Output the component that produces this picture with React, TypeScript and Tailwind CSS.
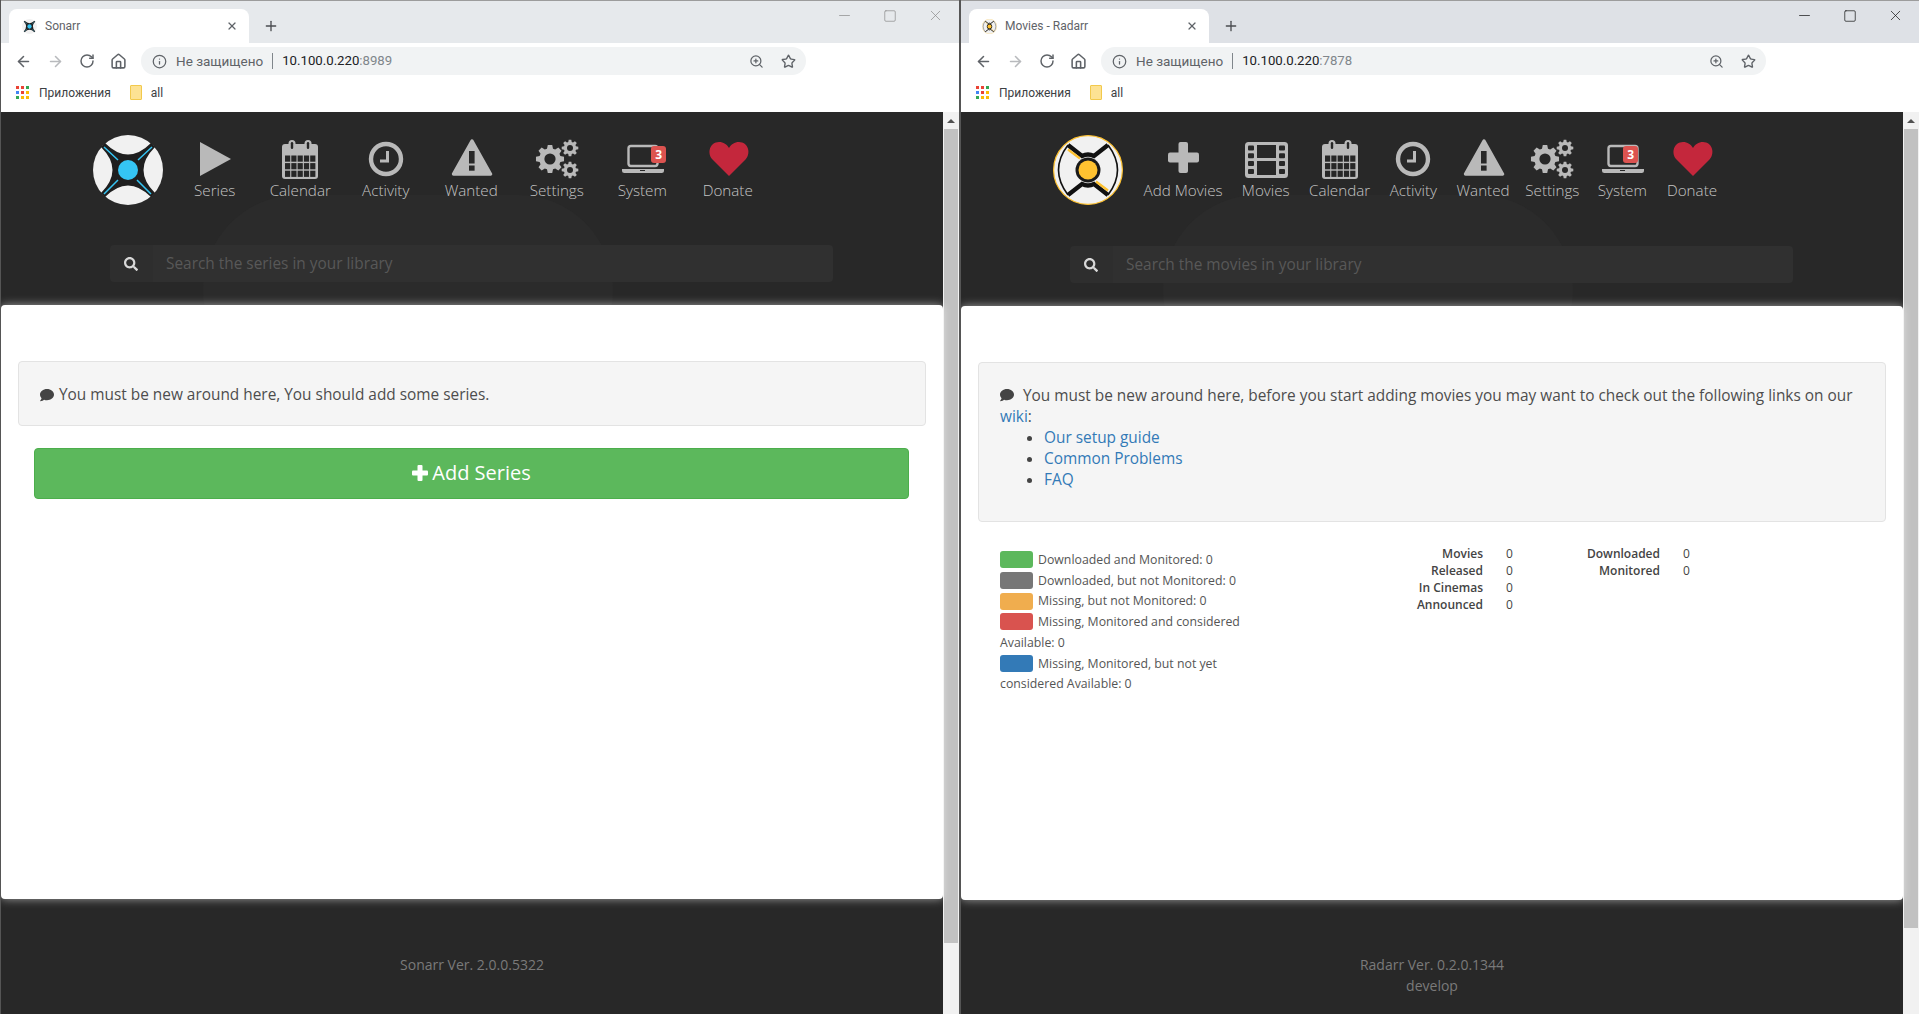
import React from 'react';
import { ArrowLeft, ArrowRight, RotateCw, Home, Info, ZoomIn, Star, X, Plus, Minus, Square } from 'lucide-react';
import { FaComment, FaSearch } from 'react-icons/fa';

const G = '#b9b9b9';
const D = '#272727';

function gearPath(cx: number, cy: number, ro: number, ri: number, teeth: number) {
  let d = '';
  const step = (Math.PI * 2) / teeth;
  for (let i = 0; i < teeth; i++) {
    const a = i * step;
    const pts: [number, number][] = [
      [ri, a - step * 0.36],
      [ro, a - step * 0.2],
      [ro, a + step * 0.2],
      [ri, a + step * 0.36],
    ];
    pts.forEach(([r, t], j) => {
      const x = cx + r * Math.cos(t);
      const y = cy + r * Math.sin(t);
      d += `${i === 0 && j === 0 ? 'M' : 'L'}${x.toFixed(2)} ${y.toFixed(2)}`;
    });
  }
  return d + 'Z';
}

function Ic({ children }: { children: React.ReactNode }) {
  return (
    <svg viewBox="0 0 48 40" className="w-[48px] h-[40px]">
      {children}
    </svg>
  );
}

const PlayIcon = () => (
  <Ic>
    <path d="M9 3 L40 20 L9 37 Z" fill={G} />
  </Ic>
);

const CalendarIcon = () => {
  const cells: React.ReactNode[] = [];
  for (let r = 0; r < 3; r++)
    for (let c = 0; c < 5; c++)
      cells.push(<rect key={`${r}${c}`} x={9 + c * 6.3} y={16.5 + r * 7.6} width="5.2" height="6.2" fill={D} />);
  return (
    <Ic>
      <rect x="6" y="5" width="36" height="35" rx="3" fill={G} />
      {cells}
      <rect x="12.5" y="1" width="7" height="11" rx="3.5" fill={G} />
      <rect x="28.5" y="1" width="7" height="11" rx="3.5" fill={G} />
      <rect x="14.8" y="3" width="2.4" height="7" rx="1.2" fill={D} />
      <rect x="30.8" y="3" width="2.4" height="7" rx="1.2" fill={D} />
    </Ic>
  );
};

const ClockIcon = () => (
  <Ic>
    <circle cx="24" cy="20" r="15" fill="none" stroke={G} strokeWidth="4.4" />
    <path d="M25.5 12 V22 H18" fill="none" stroke={G} strokeWidth="3" />
  </Ic>
);

const WarnIcon = () => (
  <Ic>
    <path d="M25 2 L43.5 35 H6.5 Z" fill={G} stroke={G} strokeWidth="3.4" strokeLinejoin="round" />
    <rect x="22" y="12" width="5.6" height="12.5" fill={D} />
    <rect x="22" y="26.5" width="5.6" height="5.2" fill={D} />
  </Ic>
);

const GearIcon = () => (
  <Ic>
    <path d={gearPath(17, 20, 14.2, 10.8, 8)} fill={G} />
    <circle cx="17" cy="20" r="5.6" fill={D} />
    <path d={gearPath(37, 9, 8.4, 6.2, 8)} fill={G} />
    <circle cx="37" cy="9" r="3" fill={D} />
    <path d={gearPath(37, 31, 8.4, 6.2, 8)} fill={G} />
    <circle cx="37" cy="31" r="3" fill={D} />
  </Ic>
);

const LaptopIcon = () => (
  <Ic>
    <rect x="10.5" y="7" width="29" height="20" rx="2.5" fill="none" stroke={G} strokeWidth="2.4" />
    <path d="M4 30 H46 V31.5 Q46 34 43.5 34 H6.5 Q4 34 4 31.5 Z" fill={G} />
    <rect x="22" y="31" width="5" height="1" fill={D} />
  </Ic>
);

const HeartIcon = () => (
  <Ic>
    <path
      d="M25 37 L8.5 20.5 C2.5 14 6 3 15 3 C19.5 3 23 5.5 25 9 C27 5.5 30.5 3 35 3 C44 3 47.5 14 41.5 20.5 Z"
      fill="#c4273c"
    />
  </Ic>
);

const PlusIcon = () => (
  <Ic>
    <rect x="19.5" y="3" width="9.5" height="31" rx="2" fill={G} />
    <rect x="9" y="13.5" width="31" height="10" rx="2" fill={G} />
  </Ic>
);

const FilmIcon = () => {
  const holes: React.ReactNode[] = [];
  for (let i = 0; i < 4; i++) {
    holes.push(<rect key={`l${i}`} x="6" y={6.5 + i * 7.8} width="6" height="5" rx="1" fill={D} />);
    holes.push(<rect key={`r${i}`} x="37" y={6.5 + i * 7.8} width="6" height="5" rx="1" fill={D} />);
  }
  return (
    <Ic>
      <rect x="3" y="3" width="43" height="36" rx="3.5" fill={G} />
      {holes}
      <rect x="15" y="6" width="19" height="13" fill={D} />
      <rect x="15" y="22" width="19" height="14" fill={D} />
    </Ic>
  );
};

function SonarrLogo({ className }: { className: string }) {
  return (
    <svg viewBox="0 0 70 70" className={className}>
      <circle cx="35" cy="35" r="35" fill="#f1f1f1" />
      <path d="M8 12 L12 8 Q35 31 58 8 L62 12 Q39 35 62 58 L58 62 Q35 39 12 62 L8 58 Q31 35 8 12 Z" fill="#1f1f1f" />
      <path d="M59 12 L45 25 M58 59 L44 45 M11 59 L25 45 M11 12 L25 25" stroke="#35c5f4" strokeWidth="1.5" />
      <circle cx="35" cy="35" r="10" fill="#35c5f4" />
    </svg>
  );
}

function RadarrLogo({ className }: { className: string }) {
  return (
    <svg viewBox="0 0 70 70" className={className}>
      <circle cx="35" cy="35" r="34.4" fill="#f1f1f1" stroke="#ffc230" strokeWidth="1.2" />
      <path d="M15 10 Q-4 35 15 60 M55 10 Q74 35 55 60" fill="none" stroke="#111" strokeWidth="1.6" />
      <path d="M15 10 L29 21 Q35 18 41 21 L55 10 M15 60 L29 49 Q35 52 41 49 L55 60" fill="none" stroke="#111" strokeWidth="4.4" />
      <circle cx="35" cy="35" r="12.5" fill="#1a1a1a" />
      <circle cx="35" cy="35" r="9.5" fill="#ffc230" />
      <path d="M15 14.5 L27 23.5 M43 46.5 L55 55.5" stroke="#ffc230" strokeWidth="2.2" />
    </svg>
  );
}

function AppsGrid() {
  const colors = ['#ea4335', '#ea4335', '#34a853', '#4285f4', '#ea4335', '#fbbc05', '#34a853', '#fbbc05', '#fbbc05'];
  return (
    <span className="grid grid-cols-3 gap-[2px] w-[13px]">
      {colors.map((c, i) => (
        <span key={i} className="w-[3px] h-[3px]" style={{ backgroundColor: c }} />
      ))}
    </span>
  );
}

function Chrome({
  title,
  favicon,
  port,
  stripClass,
  ctrlClass,
}: {
  title: string;
  favicon: React.ReactNode;
  port: string;
  stripClass: string;
  ctrlClass: string;
}) {
  return (
    <div className="font-['Roboto',sans-serif] bg-white">
      <div className={`h-[43px] border-t border-[#9c9c9c] pt-[8px] pl-[8px] flex items-start ${stripClass}`}>
        <div className="w-[240px] h-[34px] bg-white rounded-t-[8px] flex items-center pl-[13px] pr-[11px]">
          {favicon}
          <span className="ml-[8px] text-[12px] text-[#5f6368] flex-1">{title}</span>
          <X className="w-[12px] h-[12px] text-[#5f6368]" strokeWidth={2.4} />
        </div>
        <Plus className="w-[16px] h-[16px] ml-[14px] mt-[9px] text-[#4a4c50]" strokeWidth={2} />
        <div className={`ml-auto flex items-center pr-[15px] gap-[30px] mt-[-2px] ${ctrlClass}`}>
          <Minus className="w-[17px] h-[17px]" strokeWidth={1} />
          <Square className="w-[14px] h-[14px]" strokeWidth={1.2} absoluteStrokeWidth />
          <X className="w-[17px] h-[17px]" strokeWidth={1} />
        </div>
      </div>
      <div className="h-[36px] pt-[4px] flex items-start pl-[14px]">
        <div className="flex items-center h-[28px] gap-[15px] text-[#5f6368]">
          <ArrowLeft className="w-[17px] h-[17px]" strokeWidth={2.2} />
          <ArrowRight className="w-[17px] h-[17px] text-[#b8babd]" strokeWidth={2.2} />
          <RotateCw className="w-[16px] h-[16px]" strokeWidth={2.2} />
          <Home className="w-[17px] h-[17px]" strokeWidth={2.2} />
        </div>
        <div className="ml-[14px] w-[665px] h-[28px] rounded-full bg-[#f1f3f4] flex items-center pl-[11px] pr-[10px] text-[13.5px] text-[#5f6368]">
          <Info className="w-[15px] h-[15px]" strokeWidth={2} />
          <span className="ml-[9px]">Не защищено</span>
          <span className="ml-[9px] w-px h-[16px] bg-[#80868b]" />
          <span className="ml-[9px] text-[13.2px] text-[#202124]">10.100.0.220</span>
          <span className="text-[13.2px] text-[#80868b]">:{port}</span>
          <ZoomIn className="w-[15px] h-[15px] ml-auto" strokeWidth={2} />
          <Star className="w-[15px] h-[15px] ml-[17px]" strokeWidth={2.2} />
        </div>
      </div>
      <div className="h-[33px] flex items-center pl-[15px] pb-[6px] text-[12px] text-[#3c4043]">
        <AppsGrid />
        <span className="ml-[10px]">Приложения</span>
        <span className="ml-[19px] w-[12px] h-[15px] bg-[#fde293] border border-[#f2c94c] rounded-[1px]" />
        <span className="ml-[9px]">all</span>
      </div>
    </div>
  );
}

type NavItem = { label: string; icon: React.ReactNode; badgeLeft?: number; extra?: string };

function Nav({ items, itemClass, logo }: { items: NavItem[]; itemClass: string; logo: React.ReactNode }) {
  return (
    <div className="relative flex items-start pl-[92px] pt-[23px]">
      {logo}
      {items.map((it) => (
        <div key={it.label} className={`flex flex-col items-center pt-[4px] shrink-0 ${itemClass} ${it.extra ?? ''}`}>
          <div className="relative w-[48px] h-[40px]">
            {it.icon}
            {it.badgeLeft !== undefined && (
              <span
                className="absolute top-[7px] w-[15px] h-[17px] rounded-[3px] bg-[#dc5350] text-white text-[12px] font-bold leading-[17px] text-center"
                style={{ left: it.badgeLeft }}
              >
                3
              </span>
            )}
          </div>
          <span className="text-[15.2px] leading-[22px] text-[#c4c4c4] whitespace-nowrap font-light">{it.label}</span>
        </div>
      ))}
    </div>
  );
}

function SearchBox({ placeholder, mtClass }: { placeholder: string; mtClass: string }) {
  return (
    <div className={`relative ml-[109px] w-[723px] h-[37px] flex ${mtClass}`}>
      <div className="w-[43px] bg-[#2e2e2e] rounded-l-[4px] flex items-center pl-[14px]">
        <FaSearch className="w-[14px] h-[14px] text-[#d8d8d8]" />
      </div>
      <div className="flex-1 bg-[#303030] rounded-r-[4px] flex items-center pl-[13px] text-[15.4px] text-[#585858]">
        {placeholder}
      </div>
    </div>
  );
}

function Scrollbar({ thumbClass }: { thumbClass: string }) {
  return (
    <div className="w-[16px] shrink-0 bg-[#f1f1f1] flex flex-col items-center">
      <div className="h-[17px] flex items-center justify-center">
        <span className="w-0 h-0 border-x-[4px] border-x-transparent border-b-[4px] border-b-[#505050]" />
      </div>
      <div className={`w-[14px] bg-[#c1c1c1] ${thumbClass}`} />
    </div>
  );
}

function Well({ children, className }: { children: React.ReactNode; className: string }) {
  return (
    <div className={`mx-[17px] w-[908px] bg-[#f5f5f5] border border-[#e3e3e3] rounded-[4px] text-[15.4px] leading-[21px] text-[#4d4d4d] ${className}`}>
      {children}
    </div>
  );
}

function Legend({ color, text }: { color: string; text: string }) {
  return (
    <div className="leading-[20.7px] text-[12.3px] text-[#555555]">
      <span className={`inline-block w-[33px] h-[17px] rounded-[3px] align-middle mr-[5px] mb-[2px] ${color}`} />
      {text}
    </div>
  );
}

function Stat({ rows, className }: { rows: [string, string][]; className: string }) {
  return (
    <div className={`grid grid-cols-[120px_14px] gap-x-[23px] text-[12px] leading-[17px] text-[#444444] ${className}`}>
      {rows.map(([k, v]) => (
        <React.Fragment key={k}>
          <div className="text-right font-semibold">{k}</div>
          <div>{v}</div>
        </React.Fragment>
      ))}
    </div>
  );
}

function Sonarr() {
  return (
    <div className="w-[960px] h-[1014px] shrink-0 flex flex-col overflow-hidden border-l border-r border-[#555555]">
      <Chrome
        title="Sonarr"
        port="8989"
        stripClass="bg-[#e6e9ec]"
        ctrlClass="text-[#8a8a8a]"
        favicon={<SonarrLogo className="w-[15px] h-[15px]" />}
      />
      <div className="flex flex-1 min-h-0">
        <div className="flex-1 min-w-0 bg-[#282828] flex flex-col">
          <div className="relative h-[193px] overflow-hidden">
            <div className="absolute left-[202px] top-[83px] w-[410px] h-[190px] rounded-full bg-[#2b2b2b]" />
            <Nav
              itemClass="w-[85.5px] first-of-type:ml-[9px]"
              logo={<div className="w-[70px] h-[70px] mr-[9px] shrink-0"><SonarrLogo className="w-[70px] h-[70px]" /></div>}
              items={[
                { label: 'Series', icon: <PlayIcon /> },
                { label: 'Calendar', icon: <CalendarIcon /> },
                { label: 'Activity', icon: <ClockIcon /> },
                { label: 'Wanted', icon: <WarnIcon /> },
                { label: 'Settings', icon: <GearIcon /> },
                { label: 'System', icon: <LaptopIcon />, badgeLeft: 33 },
                { label: 'Donate', icon: <HeartIcon /> },
              ]}
            />
            <SearchBox placeholder="Search the series in your library" mtClass="mt-[40px]" />
          </div>
          <div className="relative h-[594px] bg-white rounded-[4px] shadow-[0_0_10px_rgba(255,255,255,0.55)] pt-[56px]">
            <Well className="h-[65px] flex items-center pl-[21px] pt-[2px]">
              <FaComment className="w-[14px] h-[14px] text-[#444444] mr-[5px]" />
              <span>You must be new around here, You should add some series.</span>
            </Well>
            <div className="ml-[33px] mr-[34px] mt-[22px] h-[51px] pb-[1px] bg-[#5cb85c] border border-[#4cae4c] rounded-[4px] flex items-center justify-center text-white text-[20px]">
              <svg viewBox="0 0 16 16" className="w-[16px] h-[16px] mr-[4px]">
                <rect x="5.5" y="0" width="5" height="16" rx="1" fill="#ffffff" />
                <rect x="0" y="5.5" width="16" height="5" rx="1" fill="#ffffff" />
              </svg>
              Add Series
            </div>
          </div>
          <div className="flex-1 pt-[55px] text-center text-[14px] leading-[21px] text-[#7a7a7a]">Sonarr Ver. 2.0.0.5322</div>
        </div>
        <Scrollbar thumbClass="h-[814px]" />
      </div>
    </div>
  );
}

function Radarr() {
  return (
    <div className="w-[959px] h-[1014px] shrink-0 flex flex-col overflow-hidden border-l border-[#555555]">
      <Chrome
        title="Movies - Radarr"
        port="7878"
        stripClass="bg-[#dee1e6]"
        ctrlClass="text-[#111111]"
        favicon={<RadarrLogo className="w-[15px] h-[15px]" />}
      />
      <div className="flex flex-1 min-h-0">
        <div className="flex-1 min-w-0 bg-[#282828] flex flex-col">
          <div className="relative h-[194px] overflow-hidden">
            <div className="absolute left-[202px] top-[83px] w-[410px] h-[190px] rounded-full bg-[#2b2b2b]" />
            <Nav
              itemClass="px-[9.6px]"
              logo={<div className="w-[70px] h-[70px] mr-[11px] shrink-0"><RadarrLogo className="w-[70px] h-[70px]" /></div>}
              items={[
                { label: 'Add Movies', icon: <PlusIcon /> },
                { label: 'Movies', icon: <FilmIcon /> },
                { label: 'Calendar', icon: <CalendarIcon /> },
                { label: 'Activity', icon: <ClockIcon /> },
                { label: 'Wanted', icon: <WarnIcon /> },
                { label: 'Settings', icon: <GearIcon />, extra: 'ml-[-3.5px]' },
                { label: 'System', icon: <LaptopIcon />, badgeLeft: 25, extra: 'ml-[-1px]' },
                { label: 'Donate', icon: <HeartIcon />, extra: 'ml-[1px]' },
              ]}
            />
            <SearchBox placeholder="Search the movies in your library" mtClass="mt-[41px]" />
          </div>
          <div className="relative h-[594px] bg-white rounded-[4px] shadow-[0_0_10px_rgba(255,255,255,0.55)] pt-[56px]">
            <Well className="h-[160px] pl-[21px] pr-[16px] pt-[22px]">
              <div>
                <FaComment className="inline-block w-[14px] h-[14px] text-[#444444] mr-[9px] align-[-1px]" />
                You must be new around here, before you start adding movies you may want to check out the following links on our{' '}
                <span className="text-[#337ab7]">wiki</span>:
              </div>
              <ul className="list-disc pl-[44px] text-[#337ab7] marker:text-[#444444]">
                <li>Our setup guide</li>
                <li>Common Problems</li>
                <li>FAQ</li>
              </ul>
            </Well>
            <div className="flex items-start pl-[39px] mt-[28px]">
              <div className="w-[265px] shrink-0">
                <Legend color="bg-[#5cb85c]" text="Downloaded and Monitored: 0" />
                <Legend color="bg-[#777777]" text="Downloaded, but not Monitored: 0" />
                <Legend color="bg-[#f0ad4e]" text="Missing, but not Monitored: 0" />
                <Legend color="bg-[#d9534f]" text="Missing, Monitored and considered Available: 0" />
                <Legend color="bg-[#337ab7]" text="Missing, Monitored, but not yet considered Available: 0" />
              </div>
              <Stat
                className="ml-[98px] mt-[-5px]"
                rows={[
                  ['Movies', '0'],
                  ['Released', '0'],
                  ['In Cinemas', '0'],
                  ['Announced', '0'],
                ]}
              />
              <Stat
                className="ml-[20px] mt-[-5px]"
                rows={[
                  ['Downloaded', '0'],
                  ['Monitored', '0'],
                ]}
              />
            </div>
          </div>
          <div className="flex-1 pt-[54px] text-center text-[14px] leading-[21px] text-[#7a7a7a]">
            <div>Radarr Ver. 0.2.0.1344</div>
            <div>develop</div>
          </div>
        </div>
        <Scrollbar thumbClass="h-[799px]" />
      </div>
    </div>
  );
}

export default function App() {
  return (
    <div className="flex w-[1919px] h-[1014px] overflow-hidden font-['Open_Sans',sans-serif]">
      <Sonarr />
      <Radarr />
    </div>
  );
}
